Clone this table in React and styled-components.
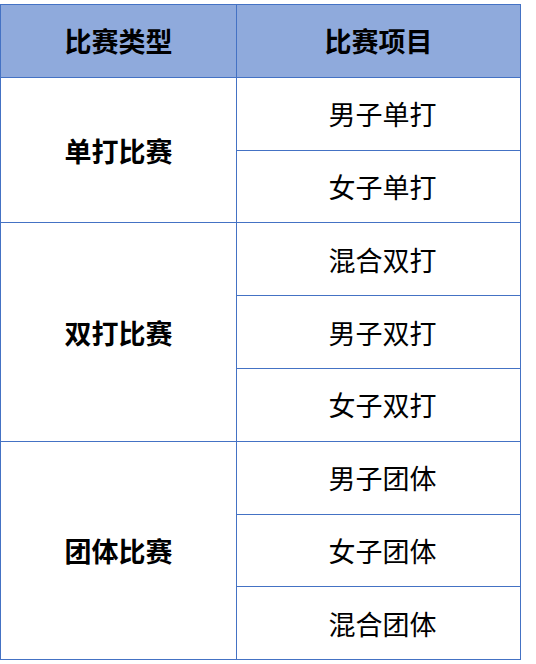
import React from 'react';
import styled, { createGlobalStyle } from 'styled-components';

const GlobalStyle = createGlobalStyle`
  body {
    margin: 0;
    background: #ffffff;
    font-family: "Noto Sans CJK SC", "Noto Sans", sans-serif;
  }
`;

const Table = styled.table`
  margin-top: 4px;
  width: 521px;
  border-collapse: collapse;
  table-layout: fixed;
  color: #000000;
`;

const HeadCell = styled.th`
  height: 71.8px;
  background: #8faadc;
  border: 1px solid #4472c4;
  font-size: 27px;
  font-weight: 700;
  text-align: center;
  padding: 0;
`;

const TypeCell = styled.td`
  border: 1px solid #4472c4;
  font-size: 27px;
  font-weight: 700;
  text-align: center;
  padding: 0;
`;

const ItemCell = styled.td`
  height: 71.8px;
  border: 1px solid #4472c4;
  font-size: 27px;
  font-weight: 400;
  text-align: center;
  padding: 0 0 0 8px;
`;

const groups = [
  { type: '单打比赛', items: ['男子单打', '女子单打'] },
  { type: '双打比赛', items: ['混合双打', '男子双打', '女子双打'] },
  { type: '团体比赛', items: ['男子团体', '女子团体', '混合团体'] },
];

const App = () => (
  <>
    <GlobalStyle />
    <Table>
      <colgroup>
        <col style={{ width: 236 }} />
        <col />
      </colgroup>
      <thead>
        <tr>
          <HeadCell>比赛类型</HeadCell>
          <HeadCell>比赛项目</HeadCell>
        </tr>
      </thead>
      <tbody>
        {groups.map((g) =>
          g.items.map((item, i) => (
            <tr key={item}>
              {i === 0 && <TypeCell rowSpan={g.items.length}>{g.type}</TypeCell>}
              <ItemCell>{item}</ItemCell>
            </tr>
          ))
        )}
      </tbody>
    </Table>
  </>
);

export default App;
